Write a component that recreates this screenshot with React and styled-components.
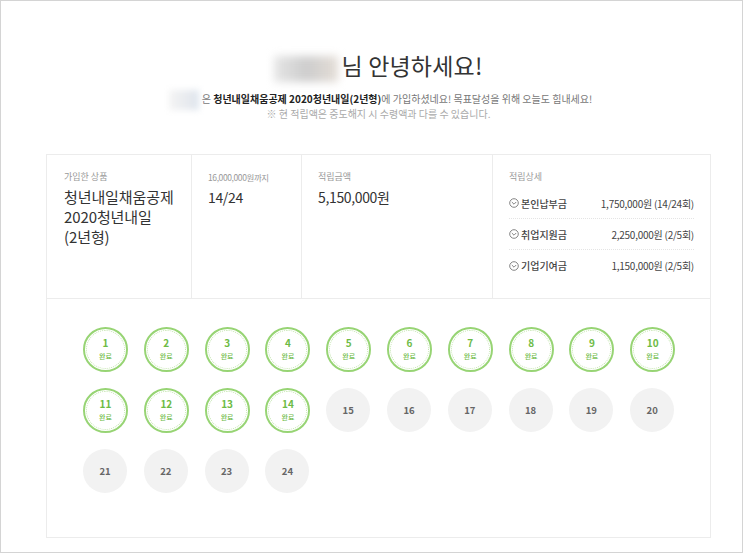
import React from "react";
import styled, { createGlobalStyle } from "styled-components";

const GlobalStyle = createGlobalStyle`
  html, body {
    margin: 0;
    padding: 0;
    background: #fff;
  }
  body {
    font-family: "Noto Sans CJK KR", "Noto Sans", sans-serif;
    color: #333;
  }
`;

const details = [
  { label: "본인납부금", value: "1,750,000원 (14/24회)" },
  { label: "취업지원금", value: "2,250,000원 (2/5회)" },
  { label: "기업기여금", value: "1,150,000원 (2/5회)" },
];

const rounds = Array.from({ length: 24 }, (_, i) => i + 1);

const App = () => (
  <Frame>
    <GlobalStyle />
    <Header>
      <Title>
        <NameBlur />님 안녕하세요!
      </Title>
      <Lead>
        <LeadBlur />은 <strong>청년내일채움공제 2020청년내일(2년형)</strong>에
        가입하셨네요! 목표달성을 위해 오늘도 힘내세요!
      </Lead>
      <Note>※ 현 적립액은 중도해지 시 수령액과 다를 수 있습니다.</Note>
    </Header>
    <Card>
      <Summary>
        <Cell $width={145}>
          <Label>가입한 상품</Label>
          <Value>
            청년내일채움공제
            <br />
            2020청년내일
            <br />
            (2년형)
          </Value>
        </Cell>
        <Cell $width={110}>
          <Label $small>16,000,000원까지</Label>
          <Value $tight>14/24</Value>
        </Cell>
        <Cell $width={191}>
          <Label>적립금액</Label>
          <Value $tight>5,150,000원</Value>
        </Cell>
        <DetailCell>
          <Label>적립상세</Label>
          <DetailList>
            {details.map((d) => (
              <DetailRow key={d.label}>
                <DetailName>
                  <svg width="10" height="10" viewBox="0 0 10 10" fill="none">
                    <circle cx="5" cy="5" r="4.3" stroke="#777" strokeWidth="0.9" />
                    <path d="M2.8 4l2.2 2.2L7.2 4" stroke="#777" strokeWidth="0.9" />
                  </svg>
                  {d.label}
                </DetailName>
                <DetailValue>{d.value}</DetailValue>
              </DetailRow>
            ))}
          </DetailList>
        </DetailCell>
      </Summary>
      <Rounds>
        {rounds.map((n) =>
          n <= 14 ? (
            <DoneRound key={n}>
              <RoundNumber>{n}</RoundNumber>
              <RoundState>완료</RoundState>
            </DoneRound>
          ) : (
            <PendingRound key={n}>{n}</PendingRound>
          )
        )}
      </Rounds>
    </Card>
  </Frame>
);

const Frame = styled.div`
  box-sizing: border-box;
  width: 743px;
  height: 553px;
  padding: 0 31px 14px 45px;
  border: 1px solid #d4d4d4;
  display: flex;
  flex-direction: column;
  overflow: hidden;
`;

const Header = styled.div`
  height: 153px;
  padding-top: 46px;
  box-sizing: border-box;
  text-align: center;
`;

const Title = styled.h1`
  margin: 0;
  height: 36px;
  font-size: 23px;
  line-height: 36px;
  font-weight: 400;
  color: #333;
  letter-spacing: 0.2px;
`;

const NameBlur = styled.span`
  display: inline-block;
  width: 64px;
  height: 26px;
  margin-right: 3px;
  vertical-align: middle;
  background: linear-gradient(90deg, #e6e6e6, #cdcdcd 50%, #e4ddd6);
  filter: blur(4px);
`;

const Lead = styled.p`
  margin: 7px 0 0;
  height: 15px;
  font-size: 10px;
  line-height: 15px;
  color: #777;
  transform: translateX(2px);
  strong {
    color: #222;
    font-weight: 700;
  }
`;

const LeadBlur = styled.span`
  display: inline-block;
  width: 30px;
  height: 20px;
  margin-right: 3px;
  vertical-align: middle;
  background: linear-gradient(90deg, #f4f4f4, #e6e9ee 70%, #dce5ee);
  filter: blur(3px);
`;

const Note = styled.p`
  margin: 1px 0 0;
  height: 15px;
  font-size: 10px;
  line-height: 15px;
  color: #aaa;
`;

const Card = styled.div`
  flex: 1;
  border: 1px solid #ececec;
  display: flex;
  flex-direction: column;
`;

const Summary = styled.div`
  height: 143px;
  display: flex;
  border-bottom: 1px solid #ececec;
`;

const Cell = styled.div`
  box-sizing: border-box;
  width: ${(p) => p.$width}px;
  padding: 15px 0 0 ${(p) => (p.$width === 145 ? 17 : 16)}px;
  border-right: 1px solid #ececec;
`;

const DetailCell = styled.div`
  flex: 1;
  padding: 15px 16px 0 16px;
`;

const Label = styled.div`
  height: 14px;
  font-size: ${(p) => (p.$small ? "8.5px" : "9px")};
  line-height: 14px;
  color: #999;
  letter-spacing: ${(p) => (p.$small ? "-0.4px" : "0")};
`;

const Value = styled.div`
  margin-top: 3px;
  font-size: ${(p) => (p.$tight ? "14px" : "15px")};
  line-height: 20px;
  color: #333;
  letter-spacing: ${(p) => (p.$tight ? "-0.35px" : "-0.1px")};
`;

const DetailList = styled.div`
  margin-top: 4px;
`;

const DetailRow = styled.div`
  height: 31px;
  box-sizing: border-box;
  display: flex;
  align-items: center;
  justify-content: space-between;
  border-bottom: 1px dotted #e4e4e4;
  &:last-child {
    border-bottom: 0;
  }
`;

const DetailName = styled.div`
  display: flex;
  align-items: center;
  gap: 2px;
  font-size: 10px;
  font-weight: 500;
  color: #444;
`;

const DetailValue = styled.div`
  font-size: 10px;
  color: #444;
  letter-spacing: -0.25px;
`;

const Rounds = styled.div`
  padding: 28px 0 0 36px;
  display: grid;
  grid-template-columns: repeat(10, 44px);
  grid-auto-rows: 44px;
  column-gap: 16.8px;
  row-gap: 17px;
`;

const DoneRound = styled.div`
  box-sizing: border-box;
  position: relative;
  width: 45px;
  height: 45px;
  border-radius: 50%;
  border: 2px solid #97d474;
  display: flex;
  flex-direction: column;
  align-items: center;
  justify-content: center;
  color: #6dbb45;
  &::before {
    content: "";
    position: absolute;
    inset: 1px;
    border-radius: 50%;
    border: 1px dotted #c4e5b0;
  }
  &::after {
    content: "";
    position: absolute;
    left: 11px;
    top: 15px;
    width: 12px;
    height: 8px;
    border-radius: 50%;
    background: #eef7e8;
    z-index: -1;
  }
`;

const RoundNumber = styled.div`
  font-size: 10px;
  line-height: 12.5px;
  font-weight: 700;
`;

const RoundState = styled.div`
  font-size: 7px;
  line-height: 12.5px;
  font-weight: 500;
`;

const PendingRound = styled.div`
  width: 44px;
  height: 44px;
  border-radius: 50%;
  background: #f2f2f2;
  display: flex;
  align-items: center;
  justify-content: center;
  font-size: 9.5px;
  font-weight: 700;
  color: #666;
`;

export default App;
